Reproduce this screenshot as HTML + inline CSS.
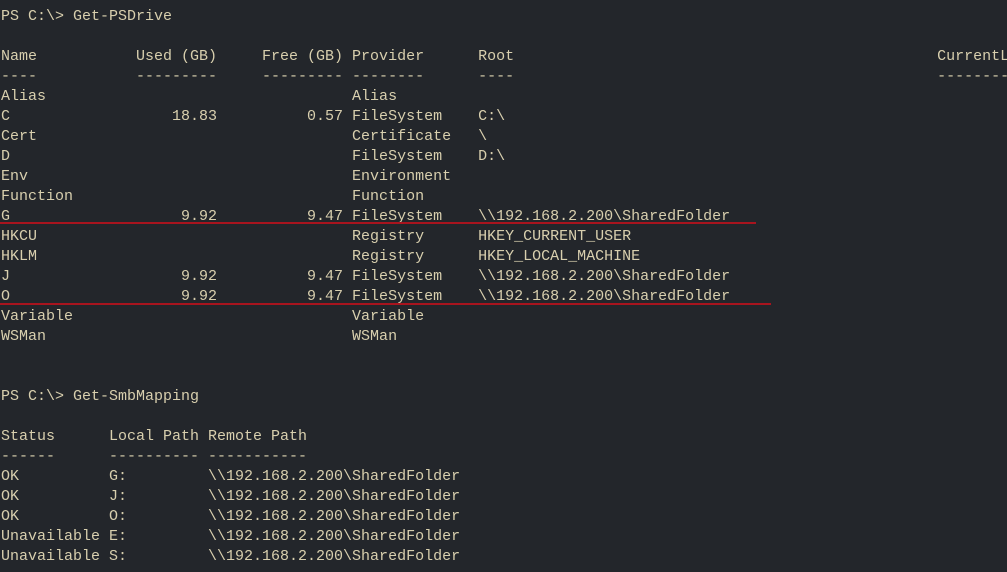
<!DOCTYPE html>
<html><head><meta charset="utf-8"><style>
html,body{margin:0;padding:0;background:#23262b;width:1007px;height:572px;overflow:hidden}
pre{margin:0;position:absolute;left:1px;top:7px;font-family:"Liberation Mono",monospace;font-size:15px;line-height:20px;color:#d8cfae;white-space:pre}
.l{position:absolute;height:2px;background:#a8141e}
</style></head><body>
<pre>PS C:\&gt; Get-PSDrive

Name           Used (GB)     Free (GB) Provider      Root                                               CurrentL
----           ---------     --------- --------      ----                                               --------
Alias                                  Alias
C                  18.83          0.57 FileSystem    C:\
Cert                                   Certificate   \
D                                      FileSystem    D:\
Env                                    Environment
Function                               Function
G                   9.92          9.47 FileSystem    \\192.168.2.200\SharedFolder
HKCU                                   Registry      HKEY_CURRENT_USER
HKLM                                   Registry      HKEY_LOCAL_MACHINE
J                   9.92          9.47 FileSystem    \\192.168.2.200\SharedFolder
O                   9.92          9.47 FileSystem    \\192.168.2.200\SharedFolder
Variable                               Variable
WSMan                                  WSMan


PS C:\&gt; Get-SmbMapping

Status      Local Path Remote Path
------      ---------- -----------
OK          G:         \\192.168.2.200\SharedFolder
OK          J:         \\192.168.2.200\SharedFolder
OK          O:         \\192.168.2.200\SharedFolder
Unavailable E:         \\192.168.2.200\SharedFolder
Unavailable S:         \\192.168.2.200\SharedFolder</pre>
<div class="l" style="left:0;top:222px;width:756px"></div>
<div class="l" style="left:0;top:303px;width:771px"></div>
</body></html>
